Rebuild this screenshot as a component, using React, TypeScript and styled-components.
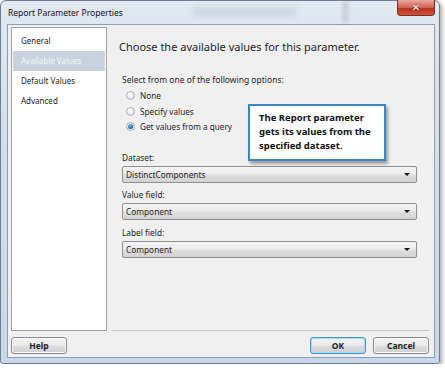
import * as React from 'react';
import styled, { createGlobalStyle } from 'styled-components';

const GlobalStyle = createGlobalStyle`
    html, body {
        margin: 0;
        padding: 0;
        background: #ffffff;
    }
    body {
        font-family: 'Noto Sans', 'Open Sans', sans-serif;
        color: #1e1e1e;
    }
`;

const Frame = styled.div`
    width: 440px;
    height: 364px;
    box-sizing: border-box;
    display: flex;
    flex-direction: column;
    padding: 0 4px 5px 6px;
    background: linear-gradient(180deg, #e1e9f1 0%, #d3dfeb 40%, #c9d8e8 100%);
    border: 1px solid #6d7e92;
    border-radius: 6px 6px 3px 3px;
    box-shadow: 2px 2px 4px rgba(0, 0, 0, 0.35);
`;

const TitleBar = styled.div`
    height: 23px;
    flex: none;
    display: flex;
    align-items: center;
    justify-content: space-between;
    position: relative;
`;

const Title = styled.span`
    font-size: 8.5px;
    color: #111;
    padding-left: 1px;
    margin-top: -1px;
`;

const Blur = styled.div`
    position: absolute;
    left: 185px;
    top: 7px;
    width: 105px;
    height: 8px;
    border-radius: 4px;
    background: rgba(120, 135, 150, 0.2);
    filter: blur(3px);
`;

const Streak = styled.div`
    position: absolute;
    left: 336px;
    top: 0;
    width: 5px;
    height: 22px;
    background: rgba(110, 120, 135, 0.25);
    filter: blur(2px);
`;

const CloseButton = styled.div`
    align-self: flex-start;
    width: 36px;
    height: 15px;
    margin-top: -1px;
    border: 1px solid #7a2a1f;
    border-top: none;
    border-radius: 0 0 4px 4px;
    background: linear-gradient(180deg, #e9a99c 0%, #d0624f 50%, #b8321f 55%, #d0533c 100%);
    display: flex;
    align-items: center;
    justify-content: center;
    color: #fff;
    font-size: 10px;
    font-weight: bold;
    font-family: 'DejaVu Sans', sans-serif;
    text-shadow: 0 0 2px #5a1a10;
`;

const Client = styled.div`
    flex: 1;
    display: flex;
    flex-direction: column;
    background: #f0f0f0;
    border: 1px solid #8f9fb2;
    padding: 2px 5px 3px 3px;
    min-height: 0;
`;

const Body = styled.div`
    flex: 1;
    display: flex;
    min-height: 0;
`;

const Nav = styled.ul`
    list-style: none;
    margin: 0;
    padding: 3px 1px;
    width: 96px;
    box-sizing: border-box;
    background: #ffffff;
    border: 1px solid #a0a0a0;
    flex: none;
`;

const NavItem = styled.li<{ $active?: boolean }>`
    height: 20px;
    line-height: 20px;
    padding-left: 8px;
    font-size: 8px;
    color: ${(p) => (p.$active ? '#f4f6f8' : '#1e1e1e')};
    background: ${(p) => (p.$active ? '#c8d2dd' : 'transparent')};
`;

const Content = styled.div`
    flex: 1;
    display: flex;
    flex-direction: column;
    margin-left: 4px;
    border-bottom: 1px solid #c9c9c9;
    padding: 13px 12px 0 8px;
`;

const Heading = styled.h1`
    margin: 0 0 20px 0;
    font-size: 11px;
    line-height: 14px;
    font-weight: normal;
    color: #1e1e1e;
`;

const Form = styled.div`
    padding-left: 3px;
    display: flex;
    flex-direction: column;
    position: relative;
`;

const Label = styled.div`
    font-size: 8.5px;
    line-height: 11px;
    margin-bottom: 3px;
`;

const RadioRow = styled.label`
    display: flex;
    align-items: center;
    gap: 5px;
    height: 15.5px;
    padding-left: 4px;
    font-size: 8.2px;
`;

const Radio = styled.span<{ $checked?: boolean }>`
    width: 9px;
    height: 9px;
    border-radius: 50%;
    box-sizing: border-box;
    border: 1px solid #a9b0b8;
    background: radial-gradient(circle at 40% 35%, #ffffff 0%, #e3e6ea 70%, #d0d5da 100%);
    display: flex;
    align-items: center;
    justify-content: center;

    &::after {
        content: '';
        display: ${(p) => (p.$checked ? 'block' : 'none')};
        width: 5px;
        height: 5px;
        border-radius: 50%;
        background: radial-gradient(circle at 40% 35%, #7fc0ea 0%, #1f6ea8 60%, #164e7a 100%);
    }
`;

const Options = styled.div`
    display: flex;
    flex-direction: column;
    margin-bottom: 18px;
`;

const Callout = styled.div`
    position: absolute;
    left: 129px;
    top: 30px;
    width: 138px;
    height: 57px;
    box-sizing: border-box;
    padding: 5px 0 0 9px;
    background: #ffffff;
    border: 2px solid #3a86c0;
    box-shadow: 2px 3px 3px rgba(0, 0, 0, 0.35);
    font-family: 'Noto Sans', sans-serif;
    font-weight: bold;
    font-size: 9.5px;
    line-height: 14px;
    white-space: nowrap;
    color: #111;
`;

const FieldLabel = styled.div`
    font-size: 8.3px;
    line-height: 10px;
    margin-bottom: 3px;
`;

const Select = styled.div`
    height: 17px;
    box-sizing: border-box;
    margin-bottom: 7.5px;
    border: 1px solid #8e8f8f;
    border-radius: 2px;
    background: linear-gradient(180deg, #f4f4f4 0%, #ececec 45%, #dedede 55%, #d3d3d3 100%);
    display: flex;
    align-items: center;
    justify-content: space-between;
    padding: 0 6px 0 3px;
    font-size: 8.3px;
`;

const Arrow = styled.span`
    width: 0;
    height: 0;
    border-left: 3px solid transparent;
    border-right: 3px solid transparent;
    border-top: 3px solid #111;
`;

const ButtonRow = styled.div`
    display: flex;
    align-items: flex-start;
    gap: 7px;
    padding-top: 6px;
    height: 23px;
    box-sizing: border-box;
    flex: none;
`;

const Button = styled.button<{ $default?: boolean }>`
    width: 56px;
    height: 17px;
    padding: 0;
    font-family: 'Noto Sans', sans-serif;
    font-size: 8.5px;
    font-weight: bold;
    color: #222;
    border: 1px solid ${(p) => (p.$default ? '#3c98cf' : '#8a8a8a')};
    border-radius: 3px;
    background: linear-gradient(180deg, #f3f3f3 0%, #ebebeb 45%, #dddddd 55%, #cfcfcf 100%);
    box-shadow: ${(p) => (p.$default ? 'inset 0 0 0 1px #a8dcf4' : 'inset 0 0 0 1px #fbfbfb')};
`;

const Spacer = styled.div`
    flex: 1;
`;

const fields = [
    { label: 'Dataset:', value: 'DistinctComponents' },
    { label: 'Value field:', value: 'Component' },
    { label: 'Label field:', value: 'Component' },
];

const App: React.FC = () => (
    <>
        <GlobalStyle />
        <Frame>
            <TitleBar>
                <Title>Report Parameter Properties</Title>
                <Blur />
                <Streak />
                <CloseButton>✕</CloseButton>
            </TitleBar>
            <Client>
                <Body>
                    <Nav>
                        <NavItem>General</NavItem>
                        <NavItem $active>Available Values</NavItem>
                        <NavItem>Default Values</NavItem>
                        <NavItem>Advanced</NavItem>
                    </Nav>
                    <Content>
                        <Heading>Choose the available values for this parameter.</Heading>
                        <Form>
                            <Label>Select from one of the following options:</Label>
                            <Options>
                                <RadioRow>
                                    <Radio />
                                    None
                                </RadioRow>
                                <RadioRow>
                                    <Radio />
                                    Specify values
                                </RadioRow>
                                <RadioRow>
                                    <Radio $checked />
                                    Get values from a query
                                </RadioRow>
                            </Options>
                            <Callout>
                                The Report parameter
                                <br />
                                gets its values from the
                                <br />
                                specified dataset.
                            </Callout>
                            {fields.map((f) => (
                                <React.Fragment key={f.label}>
                                    <FieldLabel>{f.label}</FieldLabel>
                                    <Select>
                                        {f.value}
                                        <Arrow />
                                    </Select>
                                </React.Fragment>
                            ))}
                        </Form>
                    </Content>
                </Body>
                <ButtonRow>
                    <Button>Help</Button>
                    <Spacer />
                    <Button $default>OK</Button>
                    <Button>Cancel</Button>
                </ButtonRow>
            </Client>
        </Frame>
    </>
);

export default App;
